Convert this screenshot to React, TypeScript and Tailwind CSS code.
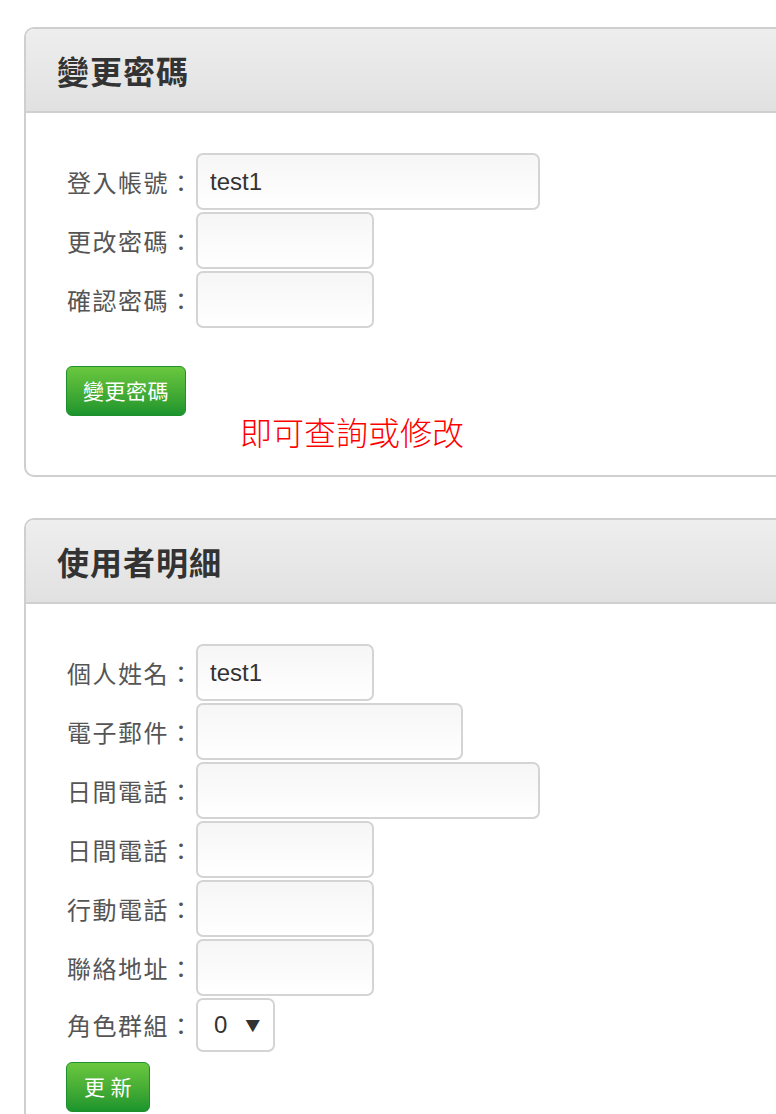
import React from 'react';

const font = 'font-["Noto_Sans_CJK_TC","Liberation_Sans",sans-serif]';

function Field({ label, width, value }: { label: string; width: string; value?: string }) {
  return (
    <div className="flex items-center mb-[2px]">
      <label className="w-[130px] shrink-0 text-[24px] tracking-[1.5px] text-[#555] pl-[1px]">{label}</label>
      <input
        readOnly
        defaultValue={value}
        className={`${width} h-[57px] rounded-[7px] border-2 border-[#d4d4d4] bg-linear-to-b from-[#f6f6f6] to-white px-[12px] text-[24px] text-[#333] font-["Liberation_Sans",Arial,sans-serif] outline-none`}
      />
    </div>
  );
}

function GreenButton({ children, width }: { children: React.ReactNode; width: string }) {
  return (
    <button
      className={`${width} h-[50px] rounded-[6px] border border-[#1d8f2c] bg-linear-to-b from-[#6ac83f] to-[#1a952d] text-white text-[21px] tracking-[0.5px]`}
    >
      {children}
    </button>
  );
}

function Panel({ title, children }: { title: string; children: React.ReactNode }) {
  return (
    <div className="w-[800px] rounded-[10px] border-2 border-[#cfcfcf] overflow-hidden">
      <div className="h-[84px] flex items-center pl-[31px] border-b-2 border-[#d0d0d0] bg-linear-to-b from-[#eeeeee] to-[#e1e1e1]">
        <h2 className="text-[32px] font-bold text-[#333] tracking-[1px]">{title}</h2>
      </div>
      {children}
    </div>
  );
}

export default function App() {
  return (
    <div className={`w-[776px] h-[1114px] overflow-hidden bg-white pt-[27px] pl-[24px] ${font}`}>
      <Panel title="變更密碼">
        <div className="pl-[40px] pt-[40px] h-[362px]">
          <Field label="登入帳號：" width="w-[344px]" value="test1" />
          <Field label="更改密碼：" width="w-[178px]" />
          <Field label="確認密碼：" width="w-[178px]" />
          <div className="mt-[38px]">
            <GreenButton width="w-[120px]">變更密碼</GreenButton>
          </div>
          <div className="ml-[174px] -mt-[5px] text-[32px] leading-[40px] text-[#ff0000] font-light">即可查詢或修改</div>
        </div>
      </Panel>

      <div className="mt-[41px]">
        <Panel title="使用者明細">
          <div className="pl-[40px] pt-[40px] pb-[20px]">
            <Field label="個人姓名：" width="w-[178px]" value="test1" />
            <Field label="電子郵件：" width="w-[267px]" />
            <Field label="日間電話：" width="w-[344px]" />
            <Field label="日間電話：" width="w-[178px]" />
            <Field label="行動電話：" width="w-[178px]" />
            <Field label="聯絡地址：" width="w-[178px]" />
            <div className="flex items-center">
              <label className="w-[130px] shrink-0 text-[24px] tracking-[1.5px] text-[#555] pl-[1px]">角色群組：</label>
              <div className="w-[79px] h-[54px] rounded-[7px] border-2 border-[#d4d4d4] bg-white flex items-center pl-[16px] gap-[18px] text-[#333]">
                <span className='text-[24px] font-["Liberation_Sans",Arial,sans-serif]'>0</span>
                <span className="text-[15px]">▼</span>
              </div>
            </div>
            <div className="mt-[10px]">
              <GreenButton width="w-[84px]">更 新</GreenButton>
            </div>
          </div>
        </Panel>
      </div>
    </div>
  );
}
